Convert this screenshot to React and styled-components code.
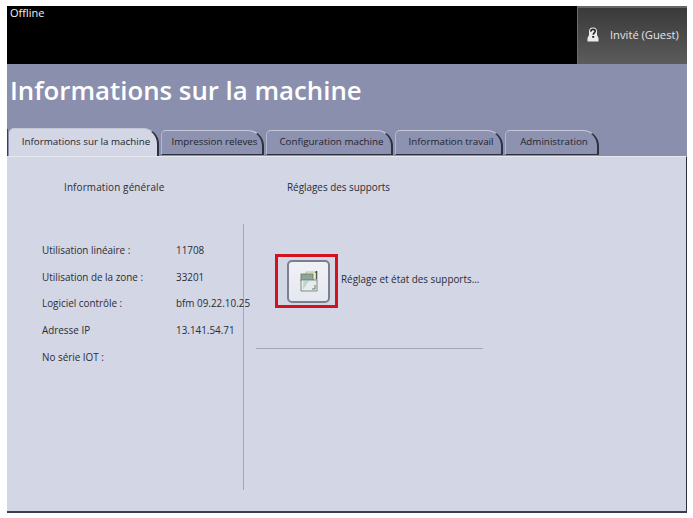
import React from "react";
import styled, { createGlobalStyle } from "styled-components";

const GlobalStyle = createGlobalStyle`
  html, body {
    margin: 0;
    padding: 0;
    background: #fff;
  }
  body {
    font-family: "Open Sans", "Liberation Sans", sans-serif;
  }
`;

const Frame = styled.div`
  width: 680px;
  height: 507px;
  margin: 6px 0 0 7px;
  display: flex;
  flex-direction: column;
  box-sizing: border-box;
`;

const TopBar = styled.div`
  height: 58px;
  background: #000;
  display: flex;
  justify-content: space-between;
  flex-shrink: 0;
`;

const Offline = styled.div`
  color: #f2f2f2;
  font-size: 11px;
  padding: 0 0 0 3px;
  line-height: 14px;
`;

const UserButton = styled.div`
  width: 110px;
  box-sizing: border-box;
  display: flex;
  align-items: center;
  gap: 11px;
  padding: 0 0 4px 9px;
  color: #e4e4e4;
  font-size: 11.2px;
  background: linear-gradient(#3a3a3a, #4e4e4e 60%, #5c5c5c);
  border-top: 2px solid #666;
  border-left: 1px solid #6c6c6c;
  white-space: nowrap;
`;

const TitleBand = styled.div`
  height: 92px;
  flex-shrink: 0;
  background: #8a8fad;
  display: flex;
  flex-direction: column;
  justify-content: space-between;
`;

const Title = styled.h1`
  margin: 0;
  padding: 8px 0 0 3px;
  color: #fff;
  font-size: 25.8px;
  line-height: 36px;
  font-weight: 600;
  white-space: nowrap;
`;

const Tabs = styled.div`
  display: flex;
  gap: 2px;
  padding-left: 1px;
  height: 27px;
  border-left: 1px solid #3c3f50;
`;

const Tab = styled.div`
  width: ${(p) => p.$w}px;
  box-sizing: border-box;
  height: ${(p) => (p.$active ? 28 : 25)}px;
  margin-top: ${(p) => (p.$active ? -1 : 1)}px;
  display: flex;
  align-items: center;
  justify-content: center;
  padding: 0 0 3px 5px;
  font-size: 9.8px;
  color: #22242e;
  white-space: nowrap;
  background: ${(p) => (p.$active ? "#d3d6e5" : "#8d92b0")};
  border-top: 1px solid #c4c7d8;
  border-left: 1px solid ${(p) => (p.$active ? "#d3d6e5" : "#b4b8ce")};
  border-right: 2px solid #2e3040;
  border-bottom: ${(p) => (p.$active ? "none" : "1px solid #2e3040")};
  border-radius: 5px 16px 0 0;
  position: relative;
  z-index: ${(p) => (p.$active ? 1 : 0)};
`;

const Panel = styled.div`
  flex: 1;
  background: #d3d6e5;
  border-top: 1px solid #e6e8f0;
  border-right: 1px solid #2e3040;
  border-bottom: 2px solid #3c3f50;
  display: grid;
  grid-template-columns: 237px 1fr;
  color: #2a2c36;
  font-size: 9.9px;
`;

const LeftCol = styled.section`
  display: flex;
  flex-direction: column;
`;

const Heading = styled.div`
  height: 67px;
  box-sizing: border-box;
  padding: 24px 0 0 ${(p) => p.$left}px;
  line-height: 13px;
  white-space: nowrap;
  letter-spacing: ${(p) => p.$spacing || 0}px;
`;

const DataList = styled.div`
  height: 266px;
  box-sizing: border-box;
  border-right: 1px solid #a4a8bc;
  padding: 20px 0 0 35px;
  display: flex;
  flex-direction: column;
  gap: 13.7px;
`;

const DataRow = styled.div`
  display: grid;
  grid-template-columns: 134px 1fr;
  line-height: 13px;
  white-space: nowrap;
`;

const RightCol = styled.section`
  display: flex;
  flex-direction: column;
`;

const SupportRow = styled.div`
  display: flex;
  align-items: center;
  margin-left: 31px;
  height: 54px;
  margin-top: 30px;
  white-space: nowrap;
`;

const Highlight = styled.div`
  width: 63px;
  height: 54px;
  box-sizing: border-box;
  border: 3px solid #d3121f;
  display: flex;
  align-items: center;
  padding-left: 9px;
  margin-right: 3px;
`;

const IconButton = styled.div`
  width: 43px;
  height: 43px;
  box-sizing: border-box;
  border: 2px solid #7b8090;
  border-radius: 5px;
  background: linear-gradient(#f0f1f6, #e6e8f0);
  display: flex;
  align-items: center;
  justify-content: center;
`;

const SupportLabel = styled.span`
  padding-bottom: 4px;
`;

const Rule = styled.div`
  width: 227px;
  height: 1px;
  margin: 40px 0 0 12px;
  background: #a4a8bc;
`;

const rows = [
  ["Utilisation linéaire :", "11708"],
  ["Utilisation de la zone :", "33201"],
  ["Logiciel contrôle :", "bfm 09.22.10.25"],
  ["Adresse IP", "13.141.54.71"],
  ["No série IOT :", ""],
];

const tabs = [
  ["Informations sur la machine", 150, true],
  ["Impression releves", 103],
  ["Configuration machine", 127],
  ["Information travail", 108],
  ["Administration", 94],
];

const GuestIcon = () => (
  <svg width="12" height="15" viewBox="0 0 12 15">
    <path d="M6 0.5C9 0.5 10 2.2 10 4.5v3.5l1.5 3v3.5H.5V11L2 8V4.5C2 2.2 3 0.5 6 0.5z" fill="#ececec" />
    <path d="M3.8 4.6C3.9 3 4.8 2.4 6 2.4c1.3 0 2.2.8 2.2 1.9 0 1.6-2 1.7-2 3.5" fill="none" stroke="#222" strokeWidth="1.6" />
    <rect x="5.2" y="9" width="2" height="1.8" fill="#222" />
  </svg>
);

const MediaIcon = () => (
  <svg width="18" height="21" viewBox="0 0 18 21">
    <rect x="6" y="1" width="10" height="8" fill="#e8edc4" stroke="#a3ac84" strokeWidth="0.7" />
    <path d="M15.5 1.5l1.2-1.2v8" fill="none" stroke="#3a4638" strokeWidth="1.1" />
    <rect x="1" y="3" width="12" height="7" fill="#8ea69a" stroke="#66766e" strokeWidth="0.8" />
    <rect x="1" y="9" width="16" height="11" fill="#e4ecec" stroke="#66766e" strokeWidth="0.8" />
    <path d="M3 18.5l6-8.5h-5.5z" fill="#bfd3d3" />
    <path d="M12 18h3v-4" fill="none" stroke="#5c6a66" strokeWidth="0.9" />
  </svg>
);

export default function App() {
  return (
    <>
      <GlobalStyle />
      <Frame>
        <TopBar>
          <Offline>Offline</Offline>
          <UserButton>
            <GuestIcon />
            Invité (Guest)
          </UserButton>
        </TopBar>
        <TitleBand>
          <Title>Informations sur la machine</Title>
          <Tabs>
            {tabs.map(([label, w, active]) => (
              <Tab key={label} $w={w} $active={active}>
                {label}
              </Tab>
            ))}
          </Tabs>
        </TitleBand>
        <Panel>
          <LeftCol>
            <Heading $left={57} $spacing={0.15}>Information générale</Heading>
            <DataList>
              {rows.map(([k, v]) => (
                <DataRow key={k}>
                  <span>{k}</span>
                  <span>{v}</span>
                </DataRow>
              ))}
            </DataList>
          </LeftCol>
          <RightCol>
            <Heading $left={43}>Réglages des supports</Heading>
            <SupportRow>
              <Highlight>
                <IconButton>
                  <MediaIcon />
                </IconButton>
              </Highlight>
              <SupportLabel>Réglage et état des supports...</SupportLabel>
            </SupportRow>
            <Rule />
          </RightCol>
        </Panel>
      </Frame>
    </>
  );
}
